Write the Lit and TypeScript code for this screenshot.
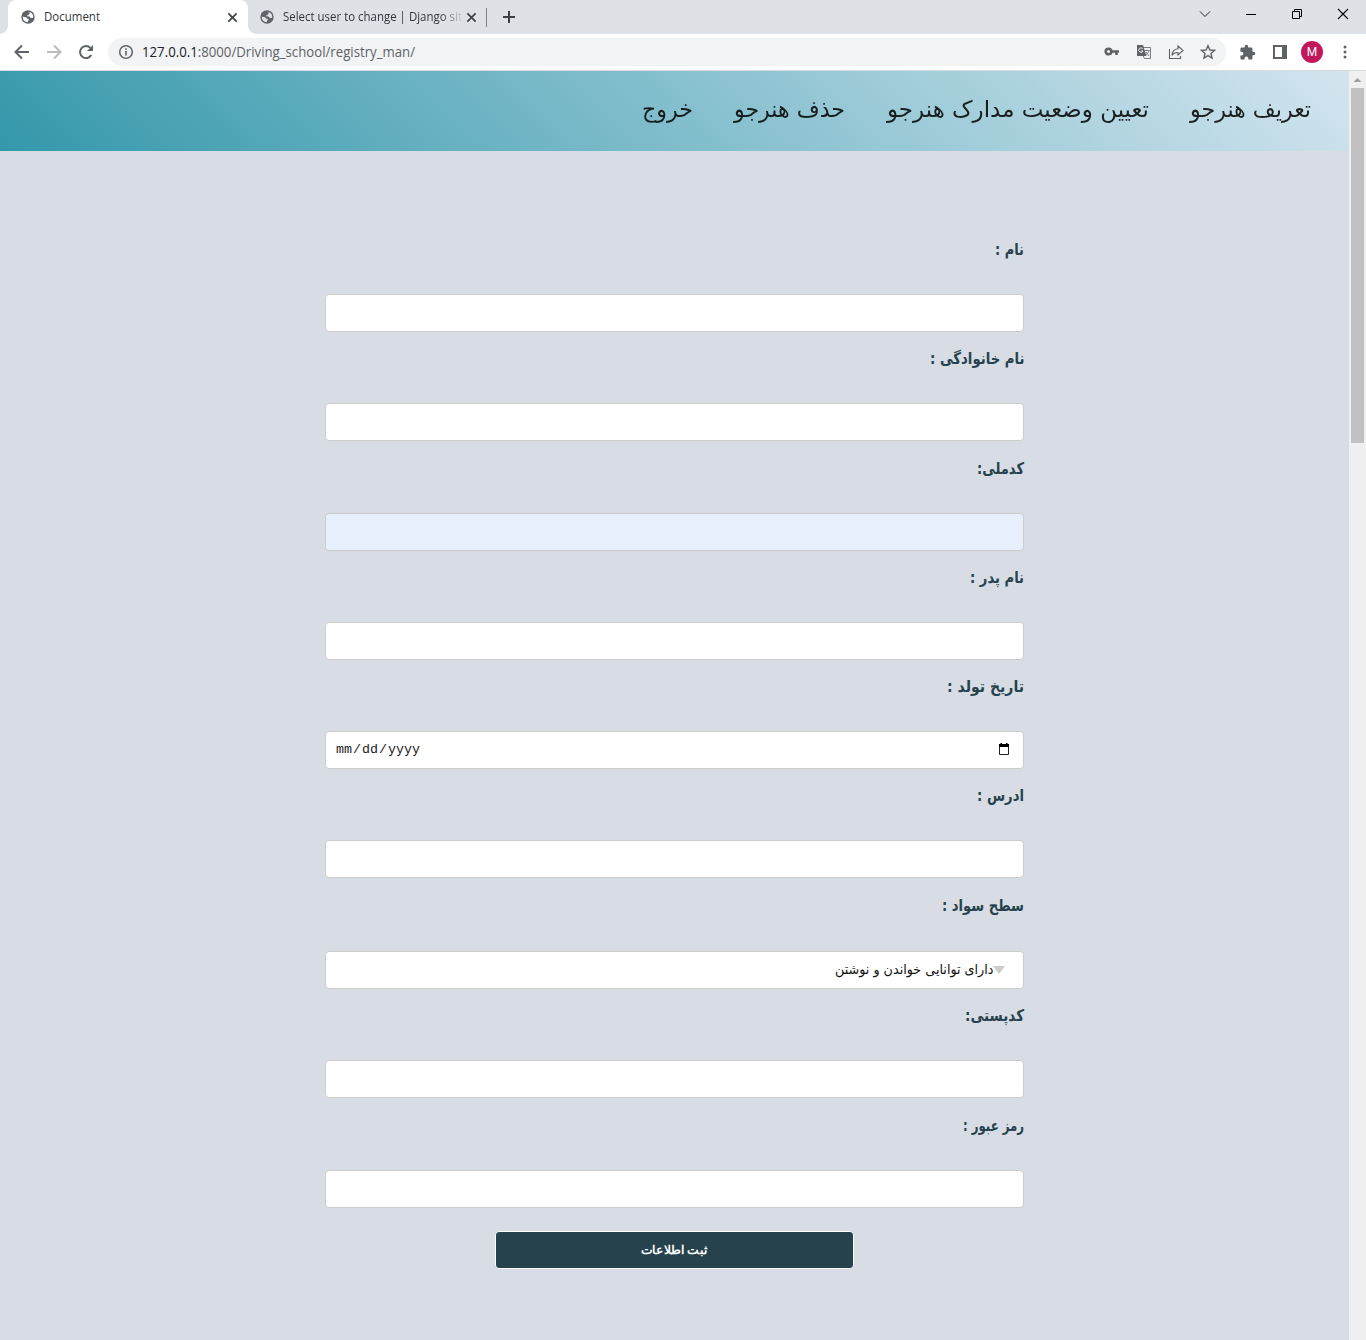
import { LitElement, html, css, svg } from "lit";
import { customElement } from "lit/decorators.js";

/** Text set to a fixed measure; glyphs are stretched evenly to fill it. */
const fit = (cls: string, text: unknown, width: number, height: number, baseline: number) => html`
  <svg class="fit ${cls}" width=${width} height=${height}>
    <text x=${width / 2} y=${baseline} text-anchor="middle" textLength=${width} lengthAdjust="spacingAndGlyphs">${text}</text>
  </svg>`;

const icon = (size: number, body: unknown, cls = "") => html`
  <svg class="icon ${cls}" width=${size} height=${size} viewBox="0 0 24 24">${body}</svg>`;

const globe = svg`<circle cx="12" cy="12" r="11.5" fill="#5f6368"/>
  <path fill="#fff" class="land" d="M3 11.2c2 1.200 4.200.8 5.500 1.200 1.500.500 1.300 2.300 2.600 2.800 1.300.400 2.400-.200 2.400 1.200 0 1.600-1.800 1.600-2.200 4.600A9 9 0 0 1 3 11.200zM11.500 3c1 .9 3 .6 3.600 1.500.6 1.200-1 1.600-1.600 2.400-.5.800.3 1.600-.8 2.200-1 .5-2.400.1-2.400 1.200 0 1.300 3.300.3 4.700 1.200 1.200.8 1 2.100 2.300 2.300 1.200.2 2.300-.5 3.600-.4A9 9 0 0 0 15.800 3.900 9 9 0 0 0 11.500 3z"/>`;
const close = svg`<path d="M3 3 21 21M21 3 3 21" fill="none" stroke="#3c4043" stroke-width="3.600"/>`;

interface Field { label: string; width: number; kind?: "auto" | "date" | "select"; }

const FIELDS: Field[] = [
  { label: "نام :", width: 29 },
  { label: "نام خانوادگی :", width: 94.500 },
  { label: "کدملی:", width: 47 },
  { label: "نام پدر :", width: 54 },
  { label: "تاریخ تولد :", width: 77, kind: "date" },
  { label: "ادرس :", width: 47 },
  { label: "سطح سواد :", width: 82, kind: "select" },
  { label: "کدپستی:", width: 59 },
  { label: "رمز عبور :", width: 61 },
];
FIELDS[2].kind = "auto";

const MENU = [
  { text: "تعریف هنرجو", width: 121 },
  { text: "تعیین وضعیت مدارک هنرجو", width: 262 },
  { text: "حذف هنرجو", width: 111 },
  { text: "خروج", width: 51 },
];

@customElement("browser-chrome")
class BrowserChrome extends LitElement {
  static styles = css`
    :host { display: block; height: 71px; font-family: "Open Sans", "Liberation Sans", sans-serif; }
    svg { display: block; flex: none; overflow: visible; }
    .tabs { display: flex; height: 34px; background: #dee1e6; box-sizing: border-box; padding-left: 8px; }
    .tab { display: flex; align-items: center; height: 34px; width: 240px; box-sizing: border-box; padding: 0 10.500px 0 13px; }
    .tab .fit { margin-left: 9px; }
    .active { background: #fff; border-radius: 8px 8px 0 0; }
    .second { padding: 0 9.500px 0 12px; width: 238px; }
    .flare { align-self: flex-end; width: 8px; height: 8px; margin-left: -8px; background: radial-gradient(circle at 0 0, #dee1e6 7.500px, #fff 8px); }
    .flare.right { margin: 0 -8px 0 0; background: radial-gradient(circle at 8px 0, #dee1e6 7.500px, #fff 8px); }
    .land { fill: #fff; }
    .second .land { fill: #dee1e6; }
    .title { font-size: 12px; fill: #33373b; }
    .fade { mask-image: linear-gradient(to right, #000 158px, transparent 181px); -webkit-mask-image: linear-gradient(to right, #000 158px, transparent 181px); }
    .spacer { flex: 1; }
    .sep { width: 1px; height: 19px; background: #808387; margin-top: 8px; }
    .plus { margin: 10px 0 0 15px; }
    .win { display: flex; gap: 34px; padding: 8px 17px 0 0; }
    .bar { display: flex; align-items: center; height: 36px; background: #fff; padding: 0 12px 0 13px; box-sizing: border-box; }
    .nav { display: flex; gap: 14px; margin-right: 13px; }
    .omni { display: flex; flex: none; align-items: center; width: 1118px; height: 28px; box-sizing: border-box; border-radius: 14px; background: #f1f3f4; padding: 0 9px 0 9px; }
    .url { font-size: 14px; fill: #5f6368; margin-left: 7px; }
    .host { fill: #202124; }
    .actions { display: flex; gap: 14px; }
    .tools { display: flex; align-items: center; margin-left: 13px; }
    .panel { margin-left: 14px; }
    .avatar { width: 22px; height: 22px; border-radius: 50%; background: #c2185b; color: #fff; font: 400 12px/22px Roboto, sans-serif; text-align: center; margin: 0 13px 0 12px; }
    .line { height: 1px; background: #d8dadd; }
  `;
  render() {
    return html`
      <div class="tabs">
        <div class="flare"></div>
        <div class="tab active">
          ${icon(14, globe)}${fit("title", "Document", 56, 20, 14)}
          <div class="spacer"></div>${icon(11, close)}
        </div>
        <div class="flare right"></div>
        <div class="tab second">
          ${icon(14, globe)}${fit("title fade", "Select user to change | Django sit", 179, 20, 14)}
          <div class="spacer"></div>${icon(11, close)}
        </div>
        <div class="sep"></div>
        <svg class="plus" width="14" height="14"><path d="M7 1V13M1 7H13" stroke="#3c4043" stroke-width="2"/></svg>
        <div class="spacer"></div>
        <div class="win">
          <svg width="12" height="12"><path d="M1 3.500 6 8.500 11 3.500" fill="none" stroke="#202124"/></svg>
          <svg width="12" height="12"><path d="M1 6.500H11" stroke="#000"/></svg>
          <svg width="12" height="12"><path d="M1.500 3.500H8.500V10.500H1.500ZM3.500 3.500V1.500H10.500V8.500H8.500" fill="none" stroke="#000"/></svg>
          <svg width="12" height="12"><path d="M1 1 11 11M11 1 1 11" stroke="#000" stroke-width="1.100"/></svg>
        </div>
      </div>
      <div class="bar">
        <div class="nav">
          <svg width="18" height="18"><path d="M16 9H3M9 2.500 2.500 9 9 15.500" fill="none" stroke="#5f6368" stroke-width="2"/></svg>
          <svg width="18" height="18"><path d="M2 9H15M9 2.500 15.500 9 9 15.500" fill="none" stroke="#babcbe" stroke-width="2"/></svg>
          <svg width="18" height="18"><path d="M14.300 12A6 6 0 1 1 13.400 4.900" fill="none" stroke="#5f6368" stroke-width="2"/><path d="M16 2V8H10Z" fill="#5f6368"/></svg>
        </div>
        <div class="omni">
          <svg width="18" height="18"><circle cx="9" cy="9" r="6.300" fill="none" stroke="#5f6368" stroke-width="1.500"/><path d="M9 8V12.500M9 5.200V6.800" stroke="#5f6368" stroke-width="1.600"/></svg>
          ${fit("url", svg`<tspan class="host">127.0.0.1</tspan>:8000/Driving_school/registry_man/`, 273, 22, 16)}
          <div class="spacer"></div>
          <div class="actions">
            <svg width="18" height="18"><circle cx="5.500" cy="8.500" r="2.800" fill="none" stroke="#5f6368" stroke-width="2.600"/><path d="M8.500 8.500H16M13.500 9V12" fill="none" stroke="#5f6368" stroke-width="2.600"/></svg>
            <svg width="18" height="18"><path d="M7.500 4.500H15.500V15.500H9.500L8 12.500" fill="none" stroke="#7b7f83"/><path d="M2 2H8L11.500 13H2Z" fill="#5f6368"/><path d="M7.700 5.800A2.200 2.200 0 1 0 8 8H6" fill="none" stroke="#f1f3f4"/><path d="M10 7.500H14.500M12 6.500V7.500M14 7.500C13.500 10 12 11 11 11.500M11 9 14 13" fill="none" stroke="#7b7f83"/></svg>
            <svg width="18" height="18"><path d="M2.500 6V15.500H13.500V13" fill="none" stroke="#5f6368" stroke-width="1.100"/><path d="M11 3 16 7.500 11 12V9.500C8 9.500 6 10.500 5 12.500 5.200 8.500 7.500 6 11 5.700Z" fill="none" stroke="#5f6368" stroke-width="1.100"/></svg>
            <svg width="18" height="18"><path d="M9 2.700 10.900 7 15.500 7.400 12 10.500 13 15 9 12.600 5 15 6 10.500 2.500 7.400 7.100 7Z" fill="none" stroke="#5f6368" stroke-width="1.400"/></svg>
          </div>
        </div>
        <div class="tools">
          ${icon(17, svg`<path fill="#5f6368" d="M20.500 11H19V7c0-1.100-.9-2-2-2h-4V3.500a2.500 2.500 0 0 0-5 0V5H4c-1.100 0-2 .9-2 2v3.800h1.500a2.700 2.700 0 0 1 0 5.400H2V20c0 1.100.9 2 2 2h3.800v-1.500a2.700 2.700 0 0 1 5.400 0V22H17c1.100 0 2-.9 2-2v-4h1.500a2.500 2.500 0 0 0 0-5z"/>`)}
          <svg class="panel" width="19" height="18"><path d="M4 3H16V15H4Z" fill="none" stroke="#5f6368" stroke-width="2"/><path d="M12 3H16V15H12Z" fill="#5f6368"/></svg>
          <div class="avatar">M</div>
          <svg width="18" height="18"><g fill="#5f6368"><circle cx="9" cy="4" r="1.500"/><circle cx="9" cy="9" r="1.500"/><circle cx="9" cy="14" r="1.500"/></g></svg>
        </div>
      </div>
      <div class="line"></div>`;
  }
}

@customElement("app-root")
class AppRoot extends LitElement {
  static styles = css`
    :host { display: block; height: 1340px; overflow: hidden; background: #d8dce5; font-family: "DejaVu Sans", sans-serif; }
    svg { display: block; flex: none; overflow: visible; }
    .fit { direction: rtl; }
    .body { display: flex; height: 1269px; }
    .page { width: 1349px; flex: none; }
    .menu { display: flex; direction: rtl; gap: 41.500px; height: 80px; box-sizing: border-box; padding: 21px 38px 0 0; background: linear-gradient(45deg, #3498ab, #d3e5ef); }
    .item { font-size: 23px; fill: #0b0d0e; opacity: 0.9; }
    .form { width: 699px; margin: 0 auto; padding-top: 87.950px; }
    .row { direction: rtl; padding-bottom: 16.300px; }
    .label { font-size: 16px; font-weight: 700; fill: #26434d; }
    .box { direction: ltr; display: flex; align-items: center; box-sizing: border-box; height: 38px; margin-top: 31px; border: 1px solid #ccc; border-radius: 4px; background: #fff; padding: 0 13px 0 9px; }
    .auto { background: #e8f0fe; }
    .select { margin-top: 32.300px; justify-content: flex-end; padding-right: 18px; }
    .date { justify-content: space-between; }
    .value { font: 13.333px "Liberation Mono", monospace; color: #222; margin-bottom: 1px; }
    .part { padding: 0 1px; }
    .calendar { margin-bottom: 2px; }
    .option { font-size: 13.500px; fill: #111; }
    .submit { display: flex; align-items: center; justify-content: center; width: 359px; height: 38px; box-sizing: border-box; margin: 7.100px auto 0; padding: 0 2px 0 0; background: #26434d; border: 1px solid #fff; border-radius: 4px; }
    .send { font-size: 11.500px; font-weight: 700; fill: #fff; }
    .scroll { width: 17px; background: #f0f0f0; display: flex; flex-direction: column; align-items: center; }
    .thumb { width: 13px; height: 355px; background: #c1c1c1; }
  `;
  private control(f: Field) {
    if (f.kind === "date") {
      return html`<div class="box date">
        <div class="value"><span class="part">mm</span>/<span class="part">dd</span>/<span class="part">yyyy</span></div>
        <svg class="calendar" width="12" height="12"><path d="M1.500 3V11.500H10.500V3" fill="none" stroke="#222"/><path d="M1 1H2.500V0H4V1H8V0H9.500V1H11V4H1Z"/></svg>
      </div>`;
    }
    if (f.kind === "select") {
      return html`<div class="box select">${fit("option", "دارای توانایی خواندن و نوشتن", 158.500, 20, 13.500)}
        <svg width="12" height="8"><path d="M0 0H12L6 8Z" fill="#ccc"/></svg></div>`;
    }
    return html`<div class="box ${f.kind ?? ""}"></div>`;
  }
  render() {
    return html`
      <browser-chrome></browser-chrome>
      <div class="body">
        <div class="page">
          <div class="menu">${MENU.map((m) => fit("item", m.text, m.width, 36, 25))}</div>
          <div class="form">
            ${FIELDS.map((f) => html`<div class="row">${fit("label", f.label, f.width, 24, 16.300)}${this.control(f)}</div>`)}
            <button class="submit">${fit("send", "ثبت اطلاعات", 66, 20, 13.500)}</button>
          </div>
        </div>
        <div class="scroll">
          <svg width="17" height="17"><path d="M4.500 11H12.500L8.500 7Z" fill="#a0a0a0"/></svg>
          <div class="thumb"></div>
        </div>
      </div>`;
  }
}
